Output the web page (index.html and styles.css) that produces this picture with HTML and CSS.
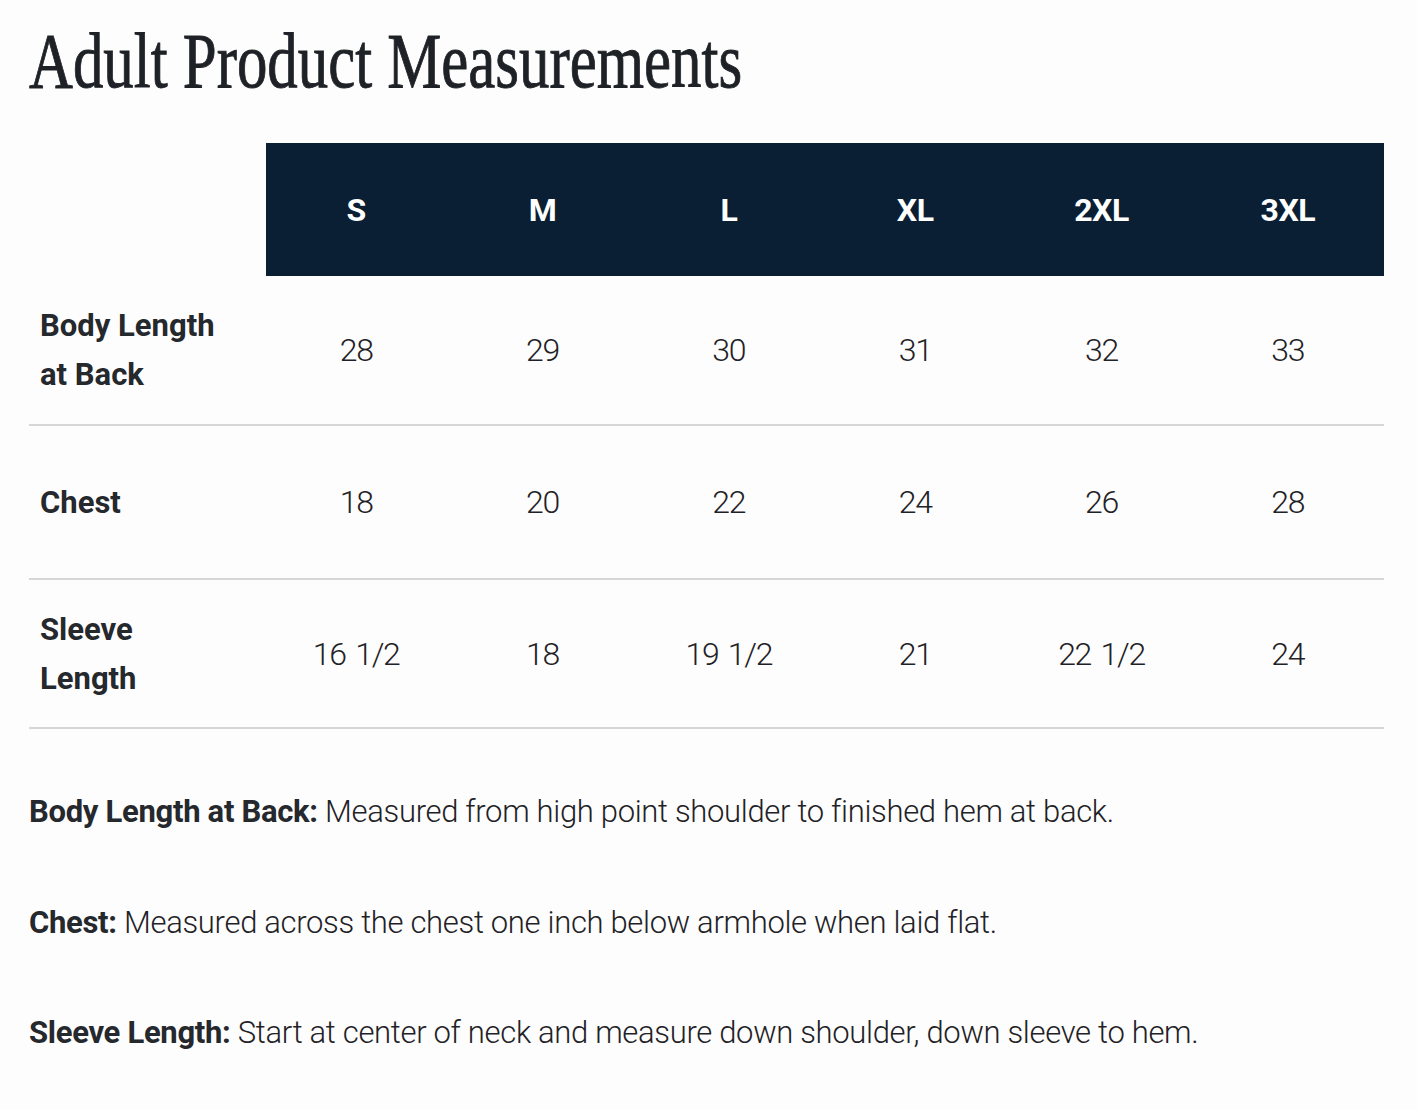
FILE: index.html
```html
<!DOCTYPE html>
<html lang="en">
<head>
<meta charset="utf-8">
<title>Adult Product Measurements</title>
<link rel="stylesheet" href="styles.css">
</head>
<body>
<main class="page">
  <h1 class="title"><span class="title-text">Adult Product Measurements</span></h1>
  <div class="size-table">
    <div class="corner"></div>
    <div class="head">
      <div class="head-cell">S</div>
      <div class="head-cell">M</div>
      <div class="head-cell">L</div>
      <div class="head-cell">XL</div>
      <div class="head-cell">2XL</div>
      <div class="head-cell">3XL</div>
    </div>
    <div class="row row-1">
      <div class="label">Body Length<br>at Back</div>
      <div class="val">28</div><div class="val">29</div><div class="val">30</div><div class="val">31</div><div class="val">32</div><div class="val">33</div>
    </div>
    <div class="row row-2">
      <div class="label">Chest</div>
      <div class="val">18</div><div class="val">20</div><div class="val">22</div><div class="val">24</div><div class="val">26</div><div class="val">28</div>
    </div>
    <div class="row row-3">
      <div class="label">Sleeve<br>Length</div>
      <div class="val">16 1/2</div><div class="val">18</div><div class="val">19 1/2</div><div class="val">21</div><div class="val">22 1/2</div><div class="val">24</div>
    </div>
  </div>
  <div class="notes">
    <p class="note"><strong>Body Length at Back:</strong> Measured from high point shoulder to finished hem at back.</p>
    <p class="note"><strong>Chest:</strong> Measured across the chest one inch below armhole when laid flat.</p>
    <p class="note"><strong>Sleeve Length:</strong> Start at center of neck and measure down shoulder, down sleeve to hem.</p>
  </div>
</main>
</body>
</html>
```
FILE: styles.css
```css
html, body {
  margin: 0;
  padding: 0;
  background: #fdfdfd;
}
.page {
  width: 1355px;
  padding: 0 0 0 29px;
  font-family: Roboto, "Liberation Sans", sans-serif;
  color: #25282c;
}
.title {
  margin: 0;
  height: 143px;
  font-family: "Liberation Serif", serif;
  font-weight: 400;
  font-size: 78px;
  line-height: 1;
  color: #1e2126;
  padding-top: 22px;
  box-sizing: border-box;
  white-space: nowrap;
  -webkit-text-stroke: 0.9px #1e2126;
}
.title-text {
  display: inline-block;
  transform: scaleX(0.78);
  transform-origin: left center;
}
.size-table {
  display: grid;
  grid-template-columns: 237px 1fr;
}
.corner { height: 133px; }
.head {
  background: #0a1f33;
  display: grid;
  grid-template-columns: repeat(6, 1fr);
  align-items: center;
  height: 133px;
}
.head-cell {
  text-align: center;
  color: #ffffff;
  font-weight: 700;
  font-size: 32px;
  letter-spacing: -0.5px;
  padding-right: 6px;
}
.row {
  grid-column: 1 / 3;
  display: grid;
  grid-template-columns: 237px repeat(6, 1fr);
  align-items: center;
  border-bottom: 2px solid #d6d6d6;
}
.row-1 { height: 148px; }
.row-2 { height: 152px; }
.row-3 { height: 147px; }
.label {
  padding-left: 11px;
  font-weight: 700;
  font-size: 31px;
  line-height: 49px;
  color: #25282c;
}
.val {
  text-align: center;
  font-size: 32px;
  font-weight: 300;
  letter-spacing: -1.3px;
  word-spacing: 3px;
  color: #1f2226;
  padding-right: 6px;
}
.notes {
  padding-top: 53px;
}
.note {
  margin: 0;
  height: 110.5px;
  font-size: 31px;
  line-height: 60px;
  font-weight: 300;
  letter-spacing: -0.32px;
  color: #1f2226;
}
.note strong {
  font-weight: 700;
  color: #25282c;
  letter-spacing: -0.3px;
}
```
